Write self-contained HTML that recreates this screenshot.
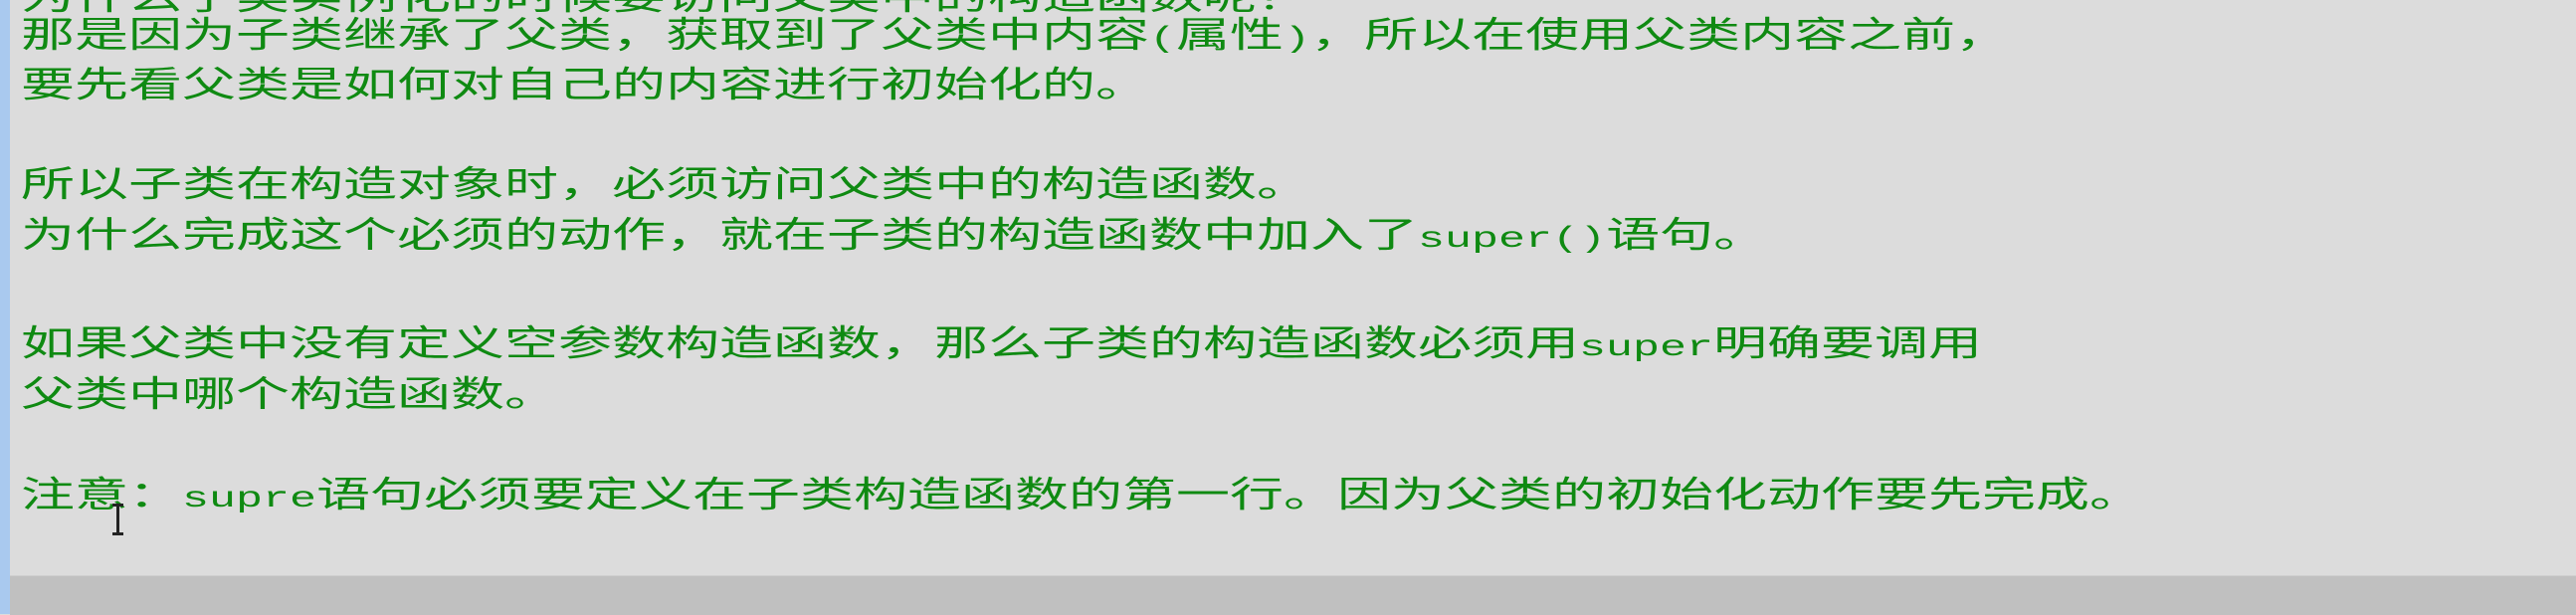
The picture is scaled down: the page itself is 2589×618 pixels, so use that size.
<!DOCTYPE html>
<html><head><meta charset="utf-8"><style>
html,body{margin:0;padding:0;}
body{width:2589px;height:617px;position:relative;overflow:hidden;background:#dcdcdc;}
.bar{position:absolute;left:0;top:0;width:10px;height:617px;background:#a9c9ef;}
.bot{position:absolute;left:10px;top:578px;width:2579px;height:39px;background:#c0c0c0;border-top:1px solid #cfcfcf;}
.l{position:absolute;left:21px;height:50px;line-height:50px;white-space:nowrap;font-family:"Liberation Sans","Noto Sans CJK SC",sans-serif;font-size:36px;color:#0f8a12;transform:scaleX(1.5);transform-origin:0 50%;}
.m{font-family:"Liberation Mono",monospace;font-size:30px;}
.cur{position:absolute;left:117px;top:506px;width:3px;height:32px;background:#222;}
.cur:before,.cur:after{content:"";position:absolute;left:-4px;width:11px;height:3px;background:#222;}
.cur:before{top:0}.cur:after{bottom:0}
</style></head><body>
<div class="bar"></div>
<div class="l" style="top:-28px">为什么子类实例化的时候要访问父类中的构造函数呢？</div>
<div class="l" style="top:10px">那是因为子类继承了父类，获取到了父类中内容<span class="m">(</span>属性<span class="m">)</span>，所以在使用父类内容之前，</div>
<div class="l" style="top:60px">要先看父类是如何对自己的内容进行初始化的。</div>
<div class="l" style="top:160px">所以子类在构造对象时，必须访问父类中的构造函数。</div>
<div class="l" style="top:211px">为什么完成这个必须的动作，就在子类的构造函数中加入了<span class="m">super()</span>语句。</div>
<div class="l" style="top:320px">如果父类中没有定义空参数构造函数，那么子类的构造函数必须用<span class="m">super</span>明确要调用</div>
<div class="l" style="top:371px">父类中哪个构造函数。</div>
<div class="l" style="top:472px">注意：<span class="m">supre</span>语句必须要定义在子类构造函数的第一行。因为父类的初始化动作要先完成。</div>
<div class="cur"></div>
<div class="bot"></div>
</body></html>
